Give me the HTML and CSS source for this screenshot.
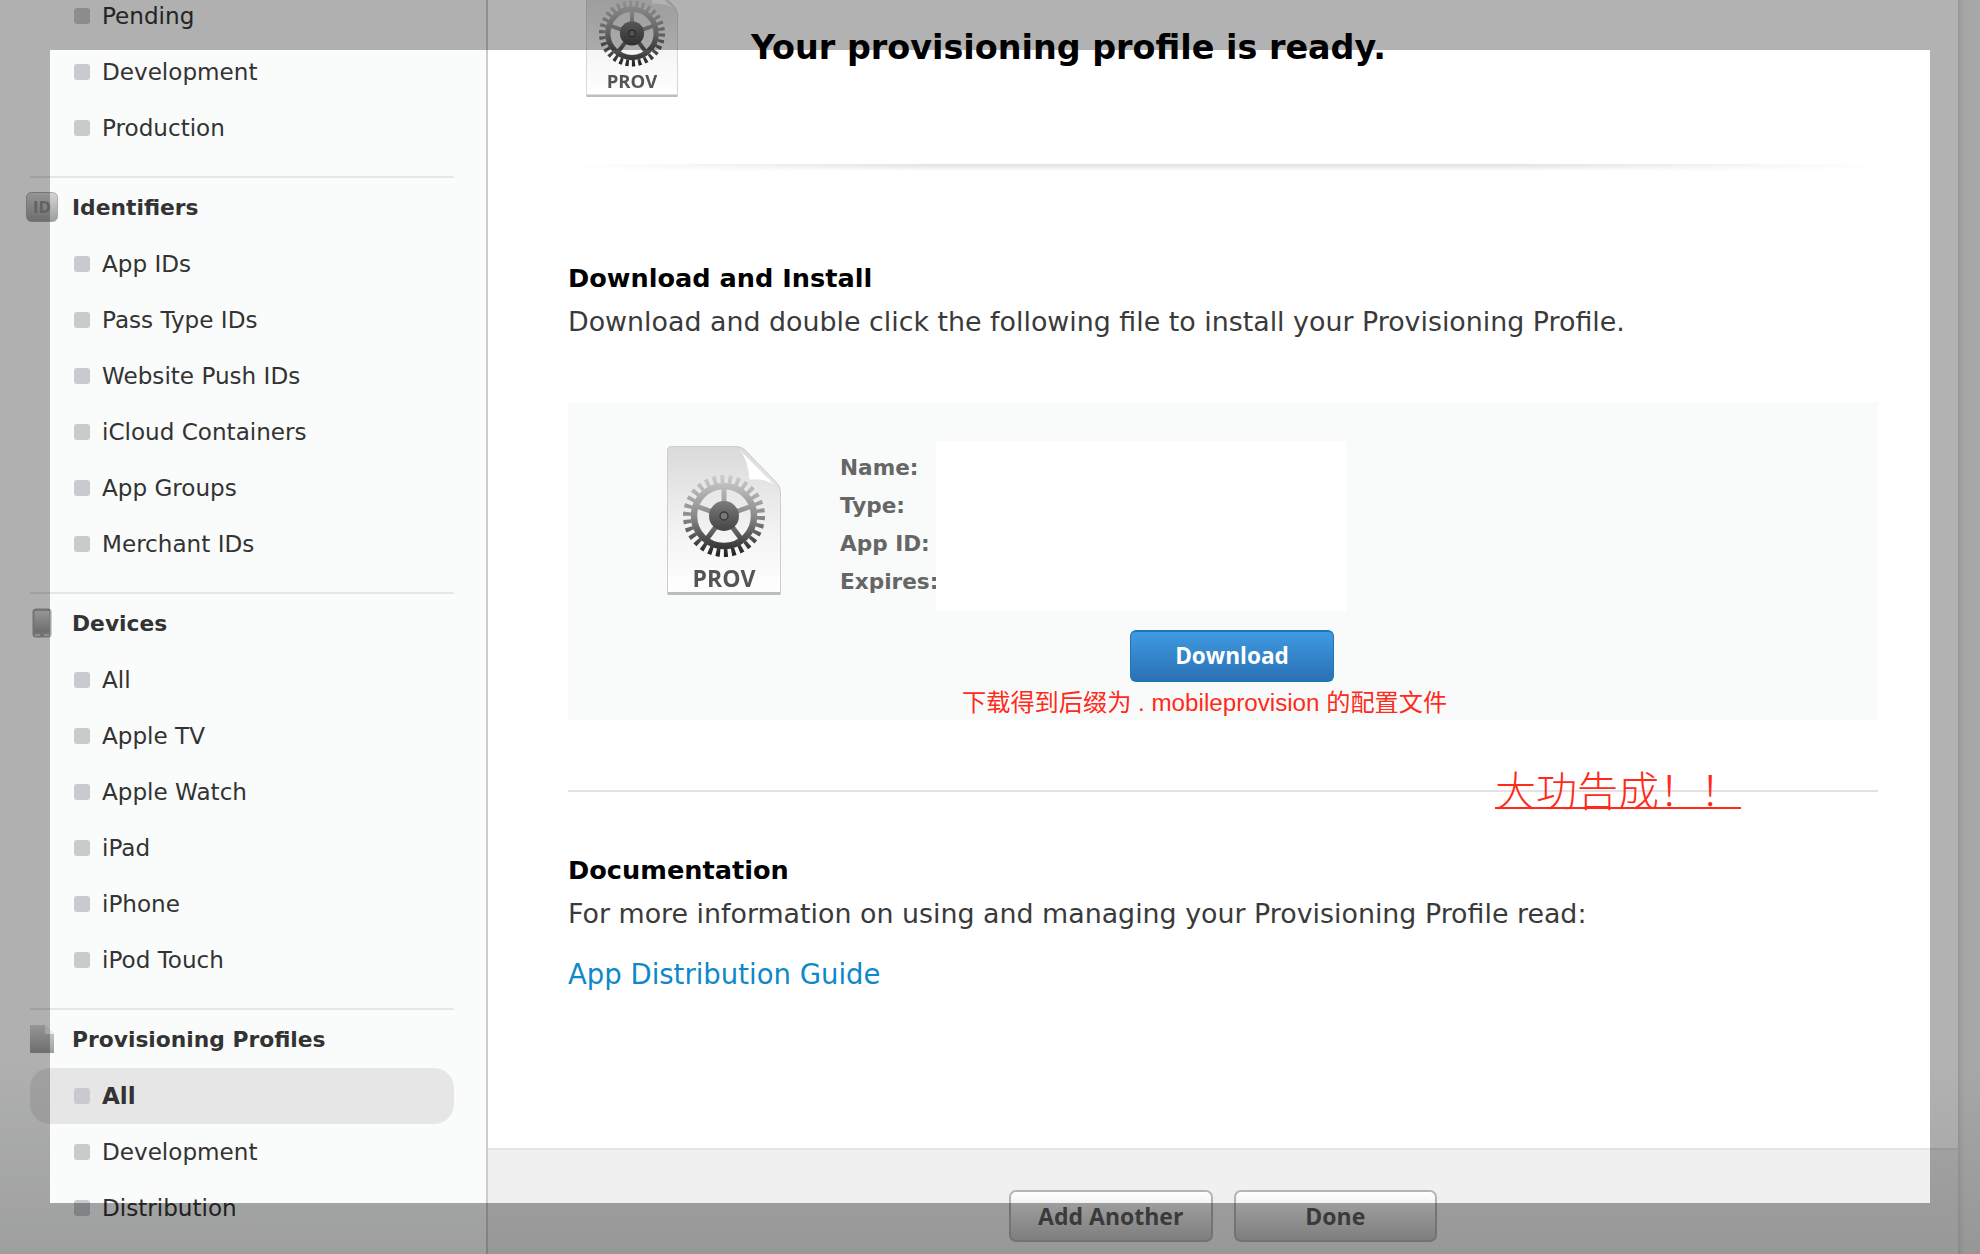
FILE: index.html
```html
<!DOCTYPE html>
<html lang="en">
<head>
<meta charset="utf-8">
<title>Your provisioning profile is ready.</title>
<link rel="stylesheet" href="styles.css">
</head>
<body>
<svg class="sprite" aria-hidden="true">
  <defs>
    <linearGradient id="pageFill" x1="0" y1="0" x2="0" y2="1">
      <stop offset="0" stop-color="#dadada"/><stop offset=".65" stop-color="#f6f6f6"/><stop offset="1" stop-color="#ffffff"/>
    </linearGradient>
    <linearGradient id="gearFill" gradientUnits="userSpaceOnUse" x1="0" y1="28" x2="0" y2="112">
      <stop offset="0" stop-color="#d0d0d0"/><stop offset=".5" stop-color="#8a8a8a"/><stop offset="1" stop-color="#1c1c1c"/>
    </linearGradient>
    <linearGradient id="hubFill" x1="0" y1="0" x2="0" y2="1">
      <stop offset="0" stop-color="#7c7c7c"/><stop offset="1" stop-color="#444444"/>
    </linearGradient>
    <linearGradient id="iconFill" x1="0" y1="0" x2="0" y2="1">
      <stop offset="0" stop-color="#d6d6d6"/><stop offset="1" stop-color="#9c9da0"/>
    </linearGradient>
    <symbol id="provDoc" viewBox="0 0 114 149">
      <path d="M.5 4 Q.5 .5 4 .5 H68 Q76 .5 80 6 L109 36 Q113.5 41 113.5 46 V146 Q113.5 148 111 148 H3 Q.5 148 .5 146 Z" fill="url(#pageFill)" stroke="#cdcdcd" stroke-width="1"/>
      <path d="M.5 146 H113.5 V149 H.5 Z" fill="#bdbdbd"/>
      <path d="M72 3 L111 42 Q100 32 82 34 Q81 14 72 3 Z" fill="#ffffff" stroke="#dcdcdc" stroke-width=".6"/>
      <circle cx="57" cy="70" r="37" fill="none" stroke="url(#gearFill)" stroke-width="8" stroke-dasharray="3.9 3.85"/>
      <circle cx="57" cy="70" r="30" fill="none" stroke="url(#gearFill)" stroke-width="6.5"/>
      <path d="M57 70 V40 M57 70 L85 60 M57 70 L75 94 M57 70 L39 94 M57 70 L29 60" fill="none" stroke="url(#gearFill)" stroke-width="5"/>
      <circle cx="57" cy="70" r="15" fill="url(#hubFill)"/>
      <circle cx="57" cy="70" r="4" fill="#777" stroke="#3a3a3a" stroke-width="1.5"/>
    </symbol>
  </defs>
</svg>

<div class="page">
  <aside class="sidebar">
    <ul class="nav nav-first">
      <li class="nav-row"><i class="dot"></i>Pending</li>
      <li class="nav-row"><i class="dot"></i>Development</li>
      <li class="nav-row"><i class="dot"></i>Production</li>
    </ul>
    <section class="nav-group">
      <h3 class="nav-head">
        <span class="nav-icon">
          <svg width="32" height="30" viewBox="0 0 32 30"><rect x=".5" y=".5" width="31" height="29" rx="5" fill="url(#iconFill)" stroke="#a9a9a9"/><text x="16" y="20.5" text-anchor="middle" class="id-text">ID</text></svg>
        </span>Identifiers
      </h3>
      <ul class="nav">
        <li class="nav-row"><i class="dot"></i>App IDs</li>
        <li class="nav-row"><i class="dot"></i>Pass Type IDs</li>
        <li class="nav-row"><i class="dot"></i>Website Push IDs</li>
        <li class="nav-row"><i class="dot"></i>iCloud Containers</li>
        <li class="nav-row"><i class="dot"></i>App Groups</li>
        <li class="nav-row"><i class="dot"></i>Merchant IDs</li>
      </ul>
    </section>
    <section class="nav-group">
      <h3 class="nav-head">
        <span class="nav-icon">
          <svg width="20" height="30" viewBox="0 0 20 30"><rect x=".5" y=".5" width="19" height="29" rx="3.5" fill="#a4a5a7"/><rect x="2.5" y="3" width="15" height="21" rx="1" fill="url(#iconFill)"/><rect x="3" y="26" width="5" height="2" fill="#cfcfcf"/><rect x="12" y="26" width="5" height="2" fill="#cfcfcf"/></svg>
        </span>Devices
      </h3>
      <ul class="nav">
        <li class="nav-row"><i class="dot"></i>All</li>
        <li class="nav-row"><i class="dot"></i>Apple TV</li>
        <li class="nav-row"><i class="dot"></i>Apple Watch</li>
        <li class="nav-row"><i class="dot"></i>iPad</li>
        <li class="nav-row"><i class="dot"></i>iPhone</li>
        <li class="nav-row"><i class="dot"></i>iPod Touch</li>
      </ul>
    </section>
    <section class="nav-group">
      <h3 class="nav-head">
        <span class="nav-icon">
          <svg width="24" height="28" viewBox="0 0 24 28"><path d="M0 0 H15 L24 9 V28 H0 Z" fill="url(#iconFill)"/><path d="M15 0 L24 9 H15 Z" fill="#ececec"/></svg>
        </span>Provisioning Profiles
      </h3>
      <ul class="nav">
        <li class="nav-row nav-row-active"><i class="dot"></i>All</li>
        <li class="nav-row"><i class="dot"></i>Development</li>
        <li class="nav-row"><i class="dot"></i>Distribution</li>
      </ul>
    </section>
  </aside>

  <main class="main">
    <div class="content">
      <header class="hero">
        <svg class="doc-small" viewBox="0 0 114 149"><use href="#provDoc"/><text x="57" y="138" text-anchor="middle" class="doc-label">PROV</text></svg>
        <h1 class="hero-title">Your provisioning profile is ready.</h1>
      </header>
      <div class="fade-rule"></div>
      <div class="body">
        <h2 class="sec-title">Download and Install</h2>
        <p class="sec-text">Download and double click the following file to install your Provisioning Profile.</p>
        <div class="panel">
          <div class="panel-row">
            <svg class="doc-big" viewBox="0 0 114 149"><use href="#provDoc"/><text x="57" y="141" text-anchor="middle" class="doc-label">PROV</text></svg>
            <dl class="meta">
              <dt>Name:</dt>
              <dt>Type:</dt>
              <dt>App ID:</dt>
              <dt>Expires:</dt>
            </dl>
            <div class="redacted"></div>
          </div>
          <a class="btn-download">Download</a>
          <p class="note">下载得到后缀为 . mobileprovision 的配置文件</p>
        </div>
        <div class="rule-wrap">
          <hr class="rule">
          <span class="done-note">大功告成！！</span>
        </div>
        <h2 class="sec-title sec-title-doc">Documentation</h2>
        <p class="sec-text">For more information on using and managing your Provisioning Profile read:</p>
        <a class="doc-link">App Distribution Guide</a>
      </div>
    </div>
    <footer class="footer">
      <a class="btn-grey">Add Another</a>
      <a class="btn-grey">Done</a>
    </footer>
  </main>
  <div class="gutter"></div>
  <div class="dim"></div>
</div>
</body>
</html>
```
FILE: styles.css
```css
* { box-sizing: border-box; }
html, body { margin: 0; padding: 0; height: 100%; overflow: hidden; background: #fff; }
body { font-family: "DejaVu Sans", sans-serif; color: #333; }

.sprite { position: absolute; width: 0; height: 0; }

.page { position: relative; display: flex; width: 1980px; height: 1254px; overflow: hidden; }

/* Sidebar */
.sidebar { flex: 0 0 488px; padding: 0 32px 0 30px; background: #fafcfb; border-right: 2px solid #cbcccb; }
.nav { list-style: none; margin: 0; padding: 0; }
.nav-first { margin-top: -12px; }
.nav-row { display: flex; align-items: center; gap: 12px; height: 56px; padding-left: 44px; font-size: 23.1px; color: #333; }
.nav-row-active { background: #e6e6e6; border-radius: 20px; font-weight: 700; }
.dot { flex: none; width: 16px; height: 16px; border-radius: 3px; background: #c9cace; }
.nav-group { margin-top: 20px; border-top: 2px solid #e5e7e6; }
.nav-head { display: flex; align-items: center; height: 58px; margin: 0 0 0 -4px; font-size: 21.8px; font-weight: 700; color: #333; }
.nav-icon { display: flex; justify-content: center; align-items: center; flex: none; width: 32px; margin-right: 14px; }
.nav-icon svg { filter: blur(.5px); }
.id-text { font: 700 15px "DejaVu Sans", sans-serif; fill: #8d8d8d; }

/* Main */
.main { flex: 1; display: flex; flex-direction: column; min-width: 0; background: #fff; }
.content { flex: 1; }
.hero { display: flex; align-items: flex-start; height: 120px; margin-top: -23px; padding-left: 98px; }
.doc-small { flex: none; width: 92px; height: 120px; filter: blur(.5px); }
.doc-label { font: 700 23px "Open Sans", sans-serif; fill: #555; }
.doc-big { flex: none; width: 114px; height: 149px; margin: 5px 0 0; filter: blur(.5px); }
.hero-title { margin: 51px 0 0 73px; font-size: 33.4px; line-height: 40px; font-weight: 700; color: #000; white-space: nowrap; }
.fade-rule { height: 7px; margin: 67px 78px 0 80px; background: linear-gradient(90deg, rgba(226,226,226,0), #e4e4e4 28%, #e4e4e4 72%, rgba(226,226,226,0)); -webkit-mask-image: linear-gradient(#000 20%, transparent); mask-image: linear-gradient(#000 20%, transparent); }

.body { padding: 0 80px 0 80px; }
.sec-title { margin: 89px 0 0; font-size: 25.6px; line-height: 36px; font-weight: 700; color: #000; }
.sec-title-doc { margin-top: 60px; }
.sec-text { margin: 8px 0 0; font-size: 26.85px; line-height: 36px; color: #3a3a3a; white-space: nowrap; }

.panel { margin-top: 62px; height: 318px; padding-top: 39px; background: #f9fbfa; }
.panel-row { display: flex; align-items: flex-start; padding-left: 99px; }
.meta { flex: none; width: 96px; margin: 8px 0 0 59px; }
.meta dt { font-size: 21.6px; line-height: 38px; font-weight: 700; color: #666; white-space: nowrap; }
.redacted { flex: none; width: 410px; height: 170px; background: #fff; }

.btn-download { display: flex; align-items: center; justify-content: center; width: 204px; height: 52px; margin: 19px 0 0 562px; padding-bottom: 2px; border: 1px solid #1b78b4; border-top: 2px solid #1a7ab8; border-radius: 6px; background: linear-gradient(#3f9ae0, #2a70b4); color: #fff; font-family: "Open Sans", sans-serif; font-size: 22.6px; font-weight: 700; }
.note { margin: 3px 0 0 394px; font-family: "Liberation Sans", "Noto Sans CJK SC", sans-serif; font-size: 24.2px; line-height: 36px; color: #ff2a1a; white-space: nowrap; }

.rule-wrap { position: relative; margin-top: 70px; }
.rule { height: 2px; margin: 0; border: 0; background: #e3e3e3; }
.done-note { position: absolute; left: 927px; top: -30px; font-family: "Noto Sans CJK SC", sans-serif; font-weight: 300; font-size: 41px; line-height: 56px; color: #ff2a1a; text-decoration: underline; text-decoration-thickness: 2px; white-space: nowrap; }

.doc-link { display: block; margin-top: 24px; font-size: 27.5px; line-height: 36px; color: #0d88c9; }

/* Footer */
.footer { flex: none; display: flex; gap: 21px; height: 106px; padding: 40px 0 0 521px; background: #f0f0f0; border-top: 2px solid #e4e4e4; }
.btn-grey { display: flex; align-items: center; justify-content: center; width: 203.5px; height: 52px; border: 2px solid #b4b4b4; border-radius: 7px; background: linear-gradient(#fff, #f2f2f2 25%, #c6c6c6); color: #5a5a5a; font-family: "Open Sans", sans-serif; font-size: 23px; font-weight: 700; }

.gutter { flex: 0 0 22px; border-left: 2px solid #dcdcdc; background: linear-gradient(90deg, #e2e2e2, #efefef 5px); }

/* Dimmed sheet backdrop with a cut-out */
.dim { position: absolute; inset: 0; background: linear-gradient(rgba(0,0,0,.3), rgba(0,0,0,.3) 85%, rgba(0,0,0,.37)); clip-path: polygon(evenodd, 0 0, 1980px 0, 1980px 1254px, 0 1254px, 0 0, 50px 50px, 1930px 50px, 1930px 1203px, 50px 1203px, 50px 50px); pointer-events: none; }
```
